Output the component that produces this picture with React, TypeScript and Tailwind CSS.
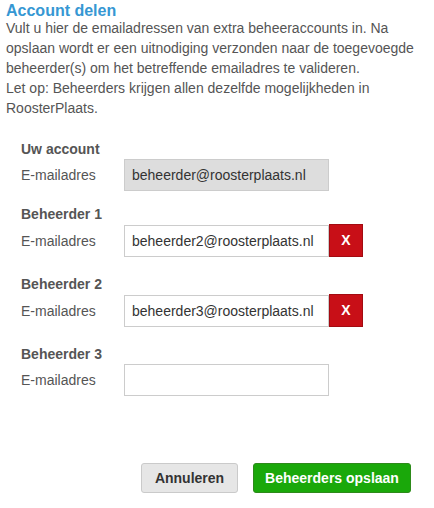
import React from "react";

const font = { fontFamily: '"Liberation Sans", Arial, sans-serif' };

function Section({
  title,
  value,
  disabled,
  removable,
  className,
}: {
  title: string;
  value: string;
  disabled?: boolean;
  removable?: boolean;
  className?: string;
}) {
  return (
    <div className={className}>
      <div className="text-[14px] leading-[18px] font-bold text-[#555555]">{title}</div>
      <div className="flex items-center mt-[1px]">
        <div className="w-[103px] text-[14px] text-[#555555] leading-[20px]">E-mailadres</div>
        <input
          readOnly
          value={value}
          className={
            disabled
              ? "w-[205px] h-[32px] border border-[#cccccc] bg-[#dddddd] px-[7px] text-[14px] text-[#333333] outline-none"
              : "w-[205px] h-[32px] border border-[#cccccc] bg-white px-[7px] text-[14px] text-[#333333] outline-none"
          }
          style={font}
        />
        {removable && (
          <button
            className="w-[34px] h-[33px] bg-[#c80f17] border border-[#a30b11] text-white font-bold text-[14px] flex items-center justify-center"
            style={font}
          >
            X
          </button>
        )}
      </div>
    </div>
  );
}

export default function App() {
  return (
    <div className="w-[434px] h-[508px] bg-white pt-[4px] px-[6px]" style={font}>
      <div className="text-[16px] leading-[13px] font-bold text-[#3697d3]">Account delen</div>
      <p className="mt-[1px] text-[14px] leading-[20px] text-[#555555] whitespace-nowrap">
        Vult u hier de emailadressen van extra beheeraccounts in. Na
        <br />
        opslaan wordt er een uitnodiging verzonden naar de toegevoegde
        <br />
        beheerder(s) om het betreffende emailadres te valideren.
        <br />
        Let op: Beheerders krijgen allen dezelfde mogelijkheden in
        <br />
        RoosterPlaats.
      </p>
      <div className="pl-[15px]">
        <Section className="mt-[22px]" title="Uw account" value="beheerder@roosterplaats.nl" disabled />
        <Section className="mt-[14px]" title="Beheerder 1" value="beheerder2@roosterplaats.nl" removable />
        <Section className="mt-[18px]" title="Beheerder 2" value="beheerder3@roosterplaats.nl" removable />
        <Section className="mt-[18px]" title="Beheerder 3" value="" />
      </div>
      <div className="flex justify-end gap-[15px] mt-[67px] pr-[17px]">
        <button
          className="w-[97px] h-[30px] rounded-[3px] bg-[#e6e6e6] border border-[#cacaca] text-[#333333] font-bold text-[14px]"
          style={font}
        >
          Annuleren
        </button>
        <button
          className="w-[158px] h-[30px] rounded-[3px] bg-[#1aa80a] border border-[#2d8a1a] text-white font-bold text-[14px]"
          style={font}
        >
          Beheerders opslaan
        </button>
      </div>
    </div>
  );
}
